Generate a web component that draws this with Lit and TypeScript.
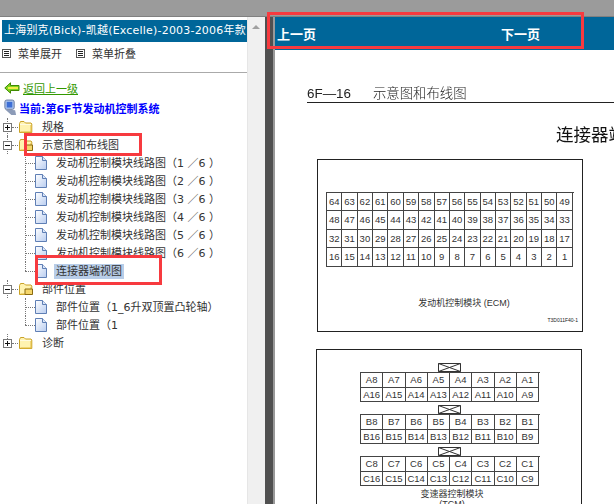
import { LitElement, css, html, svg } from 'lit'
import { customElement } from 'lit/decorators.js'

const folder = (open: boolean) => html`
  <svg class="folder" width="15" height="14" viewBox="0 0 15 14">
    <path d="M1.5 3.5 L2.5 1.5 H6 L7.5 3 H13 L13.8 4 V12.5 H1.5 Z" fill="#fff3b0" stroke="#c9a227" />
    <path d="M2.5 12 H13 V5" fill="none" stroke="#e0b83c" />
    ${open
      ? svg`<path d="M7 12.5 L7 7 H14.5 V12.5 Z" fill="#f5d66a" stroke="#8a6a10" />`
      : svg`<path d="M2 4.5 H13" stroke="#fffbe0" />`}
  </svg>
`

const page = html`
  <svg class="page" width="12" height="14" viewBox="0 0 12 14">
    <defs>
      <linearGradient id="pg" x1="0" y1="0" x2="1" y2="1">
        <stop offset="0" stop-color="#ffffff" />
        <stop offset="1" stop-color="#b9cdf0" />
      </linearGradient>
    </defs>
    <path d="M0.5 0.5 H7.5 L11.5 4.5 V13.5 H0.5 Z" fill="url(#pg)" stroke="#5f7fb5" />
    <path d="M7.5 0.5 V4.5 H11.5" fill="#dbe6f8" stroke="#5f7fb5" />
  </svg>
`

const expander = (open: boolean) => html`
  <svg class="expander" width="9" height="9" viewBox="0 0 9 9">
    <rect x="0.5" y="0.5" width="8" height="8" fill="#fff" stroke="#777" />
    <path d="M2 4.5 H7 ${open ? '' : 'M4.5 2 V7'}" stroke="#111" />
  </svg>
`

const menuIcon = html`
  <svg class="menu-icon" width="9" height="9" viewBox="0 0 9 9">
    <rect x="0.5" y="0.5" width="8" height="8" fill="#fff" stroke="#555" />
    <path d="M2 2.5 H7 M2 4.5 H7 M2 6.5 H7" stroke="#222" />
  </svg>
`

const ecmRows = [64, 48, 32, 16].map(start =>
  Array.from({ length: 16 }, (_, i) => String(start - i))
)

const letterRows = (letter: string) => [
  Array.from({ length: 8 }, (_, i) => letter + (8 - i)),
  Array.from({ length: 8 }, (_, i) => letter + (16 - i)),
]

@customElement('app-root')
export class AppRoot extends LitElement {
  private files = [
    '发动机控制模块线路图（1 ／6 ）',
    '发动机控制模块线路图（2 ／6 ）',
    '发动机控制模块线路图（3 ／6 ）',
    '发动机控制模块线路图（4 ／6 ）',
    '发动机控制模块线路图（5 ／6 ）',
    '发动机控制模块线路图（6 ／6 ）',
  ]

  private renderFolder(label: string, open: boolean, last = false) {
    return html`
      <div class="row root ${last ? 'last' : ''}">
        ${expander(open)}<span class="dots"></span>${folder(open)}
        <span class="label root-label">${label}</span>
      </div>
    `
  }

  private renderFile(label: string, end = false, selected = false) {
    return html`
      <div class="row file ${end ? 'end' : ''}">
        <span class="elbow"></span>
        ${page}
        <span class="label ${selected ? 'selected' : ''}">${label}</span>
      </div>
    `
  }

  private renderGrid(rows: string[][], cls: string) {
    return html`
      <div class="grid ${cls}">
        ${rows.map(r => html`<div class="grid-row">${r.map(c => html`<span>${c}</span>`)}</div>`)}
      </div>
    `
  }

  private renderLatch() {
    return html`
      <svg class="latch" width="23" height="9" viewBox="0 0 23 9">
        <path d="M0.5 0.5 H22.5 V8.5 H0.5 Z M0.5 0.5 L22.5 8.5 M22.5 0.5 L0.5 8.5" fill="#fff" stroke="#333" />
      </svg>
    `
  }

  render() {
    return html`
      <div class="topbar"></div>
      <div class="main">
        <aside class="left">
          <div class="left-pane">
            <div class="title">上海别克(Bick)-凯越(Excelle)-2003-2006年款</div>
            <div class="menu">
              <span class="menu-item">${menuIcon}菜单展开</span>
              <span class="menu-item">${menuIcon}菜单折叠</span>
            </div>
            <div class="back">
              <svg width="16" height="12" viewBox="0 0 16 12">
                <path d="M0.8 6 L6.5 0.8 V3.5 H15 V8.5 H6.5 V11.2 Z" fill="#7ed321" stroke="#3f8a00" />
                <path d="M4 6 H14" stroke="#f2ee4a" stroke-width="2" />
              </svg>
              <a>返回上一级</a>
            </div>
            <div class="current">
              <svg width="14" height="17" viewBox="0 0 15 18">
                <rect x="2" y="1" width="10" height="10" rx="2" fill="#a9c3ee" stroke="#66779a" />
                <rect x="4" y="3" width="6" height="6" fill="#3d6fd6" />
                <path d="M2 11 L9 17 H14 L13 12 Z" fill="#8c9bb8" />
              </svg>
              <span>当前:第6F节发动机控制系统</span>
            </div>
            <div class="tree">
              ${this.renderFolder('规格', false)}
              ${this.renderFolder('示意图和布线图', true)}
              <div class="children">
                ${this.files.map(f => this.renderFile(f))}
                ${this.renderFile('连接器端视图', true, true)}
              </div>
              ${this.renderFolder('部件位置', true)}
              <div class="children">
                ${this.renderFile('部件位置（1_6升双顶置凸轮轴）')}
                ${this.renderFile('部件位置（1', true)}
              </div>
              ${this.renderFolder('诊断', false, true)}
            </div>
          </div>
          <div class="scrollbar"><span class="arrow"></span></div>
        </aside>
        <div class="divider"></div>
        <section class="right">
          <div class="pager"><a>上一页</a><a>下一页</a></div>
          <div class="doc">
            <div class="doc-head"><span>6F—16</span><span>示意图和布线图</span></div>
            <div class="doc-title">连接器端视图</div>
            <div class="box ecm">
              ${this.renderGrid(ecmRows, 'grid-ecm')}
              <div class="caption">发动机控制模块 (ECM)</div>
              <div class="code">T3D011F40-1</div>
            </div>
            <div class="box tcm">
              ${['A', 'B', 'C'].map(l => html`
                ${this.renderLatch()}
                ${this.renderGrid(letterRows(l), 'grid-tcm')}
              `)}
              <div class="caption tcm-caption">变速器控制模块<br />(TCM)</div>
            </div>
          </div>
        </section>
      </div>
      <div class="mark m1"></div>
      <div class="mark m2"></div>
      <div class="mark m3"></div>
    `
  }

  static styles = css`
    :host {
      display: block;
      position: relative;
      width: 614px;
      height: 504px;
      overflow: hidden;
      background: #fff;
      font-family: "DejaVu Sans", "Noto Sans CJK SC", sans-serif;
      font-size: 11px;
      color: #333;
    }

    .topbar {
      height: 17px;
      background: #9b9b9b;
      border-bottom: 1px solid #808080;
      box-sizing: border-box;
    }

    .main {
      display: flex;
      height: 487px;
    }

    .left {
      display: flex;
      width: 265px;
      flex: none;
    }

    .left-pane {
      width: 247px;
      flex: none;
      padding-top: 3px;
      overflow: hidden;
    }

    .title {
      width: 247px;
      height: 22px;
      margin-left: 2px;
      padding-left: 2px;
      box-sizing: border-box;
      line-height: 21px;
      letter-spacing: 0.2px;
      background: #006699;
      color: #fff;
      white-space: nowrap;
      overflow: hidden;
    }

    .menu {
      display: flex;
      height: 31px;
      align-items: center;
      padding: 0 0 8px 2px;
      gap: 14px;
      box-sizing: border-box;
      border-bottom: 1px solid #aaa;
    }

    .menu-item {
      display: inline-flex;
      align-items: center;
      gap: 7px;
    }

    .back {
      display: flex;
      align-items: center;
      gap: 3px;
      height: 18px;
      margin-top: 6px;
      padding-left: 4px;
    }

    .back a {
      color: #339900;
      text-decoration: underline;
    }

    .current {
      display: flex;
      align-items: center;
      gap: 2px;
      height: 19px;
      padding-left: 3px;
      margin-top: 1px;
      color: #0000ff;
      font-weight: bold;
    }

    .tree {
      margin-top: 1px;
    }

    .row {
      display: flex;
      align-items: center;
      height: 18px;
      position: relative;
      white-space: nowrap;
    }

    .root {
      padding-left: 3px;
    }

    .root::before {
      content: "";
      position: absolute;
      left: 7px;
      top: 0;
      height: 18px;
      border-left: 1px dotted #777;
      z-index: 0;
    }

    .root.last::before {
      height: 9px;
    }

    .expander {
      position: relative;
      z-index: 1;
      flex: none;
    }

    .dots {
      width: 6px;
      border-top: 1px dotted #777;
      flex: none;
    }

    .folder {
      flex: none;
    }

    .page {
      flex: none;
    }

    .root-label {
      margin-left: 5px;
    }

    .file {
      padding-left: 25px;
    }

    .elbow {
      width: 10px;
      height: 100%;
      flex: none;
      position: relative;
    }

    .elbow::before {
      content: "";
      position: absolute;
      left: 0;
      top: 0;
      bottom: 0;
      border-left: 1px dotted #777;
    }

    .elbow::after {
      content: "";
      position: absolute;
      left: 0;
      right: 0;
      top: 9px;
      border-top: 1px dotted #777;
    }

    .end .elbow::before {
      bottom: 9px;
    }

    .label {
      margin-left: 8px;
      padding: 0 1px;
      line-height: 15px;
    }

    .selected {
      background: #b8cde8;
      margin-left: 7px;
      padding: 0 2px;
    }

    .scrollbar {
      width: 18px;
      flex: none;
      background: #f0f0f0;
      border-left: 1px solid #e6e6e6;
      box-sizing: border-box;
      position: relative;
    }

    .arrow {
      position: absolute;
      left: 4px;
      top: 8px;
      border: 4px solid transparent;
      border-top: 0;
      border-bottom: 4px solid #a0a0a0;
    }

    .divider {
      width: 10px;
      flex: none;
      background: #505050;
      border-right: 2px solid #999;
      box-sizing: border-box;
    }

    .right {
      flex: 1;
      min-width: 0;
      overflow: hidden;
    }

    .pager {
      display: flex;
      height: 33px;
      padding: 7px 0 0 2px;
      box-sizing: border-box;
      background: #006699;
      color: #fff;
      font-weight: bold;
      font-size: 13px;
    }

    .pager a {
      width: 224px;
      flex: none;
    }

    .doc {
      width: 340px;
      padding: 37px 0 0 32px;
      filter: blur(0.35px);
      color: #222;
      font-family: "Liberation Sans", "Noto Sans CJK SC", sans-serif;
    }

    .doc-head {
      display: flex;
      gap: 22px;
      width: 320px;
      height: 15px;
      border-bottom: 1px solid #222;
      line-height: 13px;
      font-size: 13.4px;
      font-weight: 300;
    }

    .doc-title {
      margin: 22px 0 0 249px;
      width: 100px;
      height: 21px;
      font-size: 17.5px;
      line-height: 20px;
      white-space: nowrap;
      color: #111;
    }

    .box {
      box-sizing: border-box;
      width: 266px;
      border: 1px solid #222;
      background: #fff;
      position: relative;
    }

    .ecm {
      height: 173px;
      margin: 13px 0 0 10px;
      padding: 32px 0 0 8px;
    }

    .tcm {
      height: 200px;
      margin: 17px 0 0 9px;
      padding-top: 13px;
    }

    .grid {
      border-top: 1px solid #444;
      border-left: 1px solid #444;
      font-size: 9.5px;
      color: #333;
    }

    .grid-row {
      display: flex;
    }

    .grid-row span {
      box-sizing: border-box;
      text-align: center;
      border-right: 1px solid #444;
      border-bottom: 1px solid #444;
    }

    .grid-ecm {
      width: 247px;
      height: 74px;
    }

    .grid-ecm .grid-row span {
      width: 15.37px;
      height: 18.4px;
      line-height: 18px;
    }

    .latch {
      display: block;
      margin: 0 auto;
    }

    .tcm .latch {
      margin-left: 121px;
    }

    .grid-tcm {
      width: 179px;
      margin: 0 0 3px 43px;
      font-size: 9.5px;
    }

    .grid-tcm .grid-row span {
      width: 22.25px;
      height: 14.5px;
      line-height: 14px;
    }

    .caption {
      font-size: 9px;
      text-align: center;
      color: #333;
    }

    .ecm .caption {
      position: absolute;
      left: 0;
      right: 0;
      top: 136px;
      padding-left: 28px;
      white-space: nowrap;
    }

    .tcm-caption {
      line-height: 10px;
      margin-top: 2px;
      padding-left: 6px;
    }

    .code {
      position: absolute;
      right: 4px;
      top: 157px;
      font-size: 5px;
    }

    .mark {
      position: absolute;
      border: 3px solid #f73a3f;
      box-sizing: border-box;
      pointer-events: none;
    }

    .m1 {
      left: 24px;
      top: 133px;
      width: 118px;
      height: 23px;
    }

    .m2 {
      left: 35px;
      top: 255px;
      width: 127px;
      height: 30px;
    }

    .m3 {
      left: 267px;
      top: 12px;
      width: 317px;
      height: 37px;
    }
  `
}

declare global {
  interface HTMLElementTagNameMap {
    'app-root': AppRoot
  }
}
